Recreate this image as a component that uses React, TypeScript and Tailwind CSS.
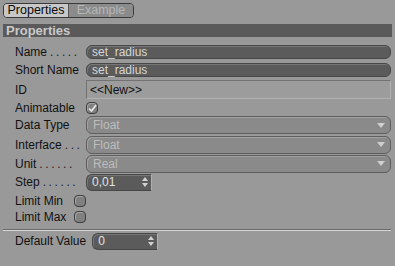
import React from 'react';

const font = { fontFamily: '"Liberation Sans", Arial, sans-serif' };

function Label({ text, dots = 0, width = 71 }: { text: string; dots?: number; width?: number }) {
  return (
    <div className="flex shrink-0 items-center overflow-hidden whitespace-nowrap text-[12px] text-[#111]" style={{ width }}>
      <span>{text}</span>
      {dots > 0 && <span className="ml-[3px] tracking-[2.6px] text-[#222]">{'.'.repeat(dots)}</span>}
    </div>
  );
}

function DarkField({ value }: { value: string }) {
  return (
    <div className="flex h-[14px] flex-1 items-center rounded-[6px] border border-[#474747] bg-[#5b5b5b] pl-[5px] text-[12px] text-[#d6d6d6] shadow-[inset_1px_1px_0_#777]">
      {value}
    </div>
  );
}

function Dropdown({ value }: { value: string }) {
  return (
    <div className="flex h-[18px] flex-1 items-center justify-between rounded-[6px] border border-[#5e5e5e] bg-[#8a8a8a] pl-[6px] pr-[5px] text-[12px] text-[#bdbdbd] shadow-[inset_1px_1px_0_#a2a2a2]">
      <span>{value}</span>
      <svg width="8" height="5" viewBox="0 0 8 5">
        <path d="M0 0H8L4 5Z" fill="#cfcfcf" />
      </svg>
    </div>
  );
}

function Spinner({ value }: { value: string }) {
  return (
    <div className="flex h-[17px] w-[66px] items-center justify-between rounded-l-[6px] border border-[#474747] border-r-[#b0b0b0] bg-[#5b5b5b] pl-[5px] pr-[3px] text-[12px] text-[#e2e2e2] shadow-[inset_1px_1px_0_#777]">
      <span>{value}</span>
      <svg width="6" height="10" viewBox="0 0 6 10">
        <path d="M0 4H6L3 0Z M0 6H6L3 10Z" fill="#d2d2d2" />
      </svg>
    </div>
  );
}

function Checkbox({ checked }: { checked?: boolean }) {
  return (
    <div className="flex h-[12px] w-[12px] items-center justify-center rounded-[4px] border border-[#3e3e3e] bg-[#808080] shadow-[inset_1px_1px_0_#a6a6a6]">
      {checked && (
        <svg width="9" height="8" viewBox="0 0 9 8">
          <path d="M1 4.5L3.5 7L8 1" stroke="#ececec" strokeWidth="1.6" fill="none" />
        </svg>
      )}
    </div>
  );
}

export default function App() {
  return (
    <div className="h-[266px] w-[395px] overflow-hidden bg-[#999999]" style={font}>
      {/* tabs */}
      <div className="px-[3px] pt-[3px]">
        <div className="flex h-[15px] w-[131px] overflow-hidden rounded-[4px] border border-[#3a3a3a] text-[12.5px] leading-none">
          <div className="flex w-[65px] items-center justify-center border-r border-[#555] bg-[#c8c8c8] text-[#0a0a0a]">Properties</div>
          <div className="flex flex-1 items-center justify-center bg-[#8b8b8b] text-[#b6b6b6]">Example</div>
        </div>
      </div>

      {/* section header */}
      <div className="mx-[3px] mt-[6px] mr-[3px] flex h-[13px] items-center bg-[#5a5a5a] pl-[3px] text-[13px] font-bold text-[#c9c9c9]">
        Properties
      </div>

      <div className="pl-[15px] pr-[4px] pt-[6px]">
        <div className="flex h-[18px] items-center">
          <Label text="Name" dots={5} />
          <DarkField value="set_radius" />
        </div>
        <div className="flex h-[18px] items-center">
          <Label text="Short Name" />
          <DarkField value="set_radius" />
        </div>
        <div className="flex h-[21px] items-center">
          <Label text="ID" />
          <div className="flex h-[19px] flex-1 items-center border border-[#727272] border-b-[#b2b2b2] border-r-[#b2b2b2] bg-[#9c9c9c] pl-[3px] text-[12px] text-[#111]">
            {'<<New>>'}
          </div>
        </div>
        <div className="flex h-[15px] items-center">
          <Label text="Animatable" />
          <Checkbox checked />
        </div>
        <div className="flex h-[20px] items-center">
          <Label text="Data Type" />
          <Dropdown value="Float" />
        </div>
        <div className="flex h-[19px] items-center">
          <Label text="Interface" dots={3} />
          <Dropdown value="Float" />
        </div>
        <div className="flex h-[19px] items-center">
          <Label text="Unit" dots={6} />
          <Dropdown value="Real" />
        </div>
        <div className="flex h-[18px] items-center">
          <Label text="Step" dots={6} />
          <Spinner value="0,01" />
        </div>
        <div className="mt-[2px] flex h-[16px] items-center">
          <Label text="Limit Min" width={59} />
          <Checkbox />
        </div>
        <div className="flex h-[16px] items-center">
          <Label text="Limit Max" width={59} />
          <Checkbox />
        </div>
      </div>

      <div className="ml-[3px] mr-[4px] mt-[4px] h-[2px] border-t border-[#6a6a6a] border-b border-b-[#d6d6d6]" />

      <div className="flex h-[19px] items-center gap-[6px] pl-[15px] pt-[1px]">
        <div className="text-[12px] text-[#111]">Default Value</div>
        <Spinner value="0" />
      </div>
    </div>
  );
}
